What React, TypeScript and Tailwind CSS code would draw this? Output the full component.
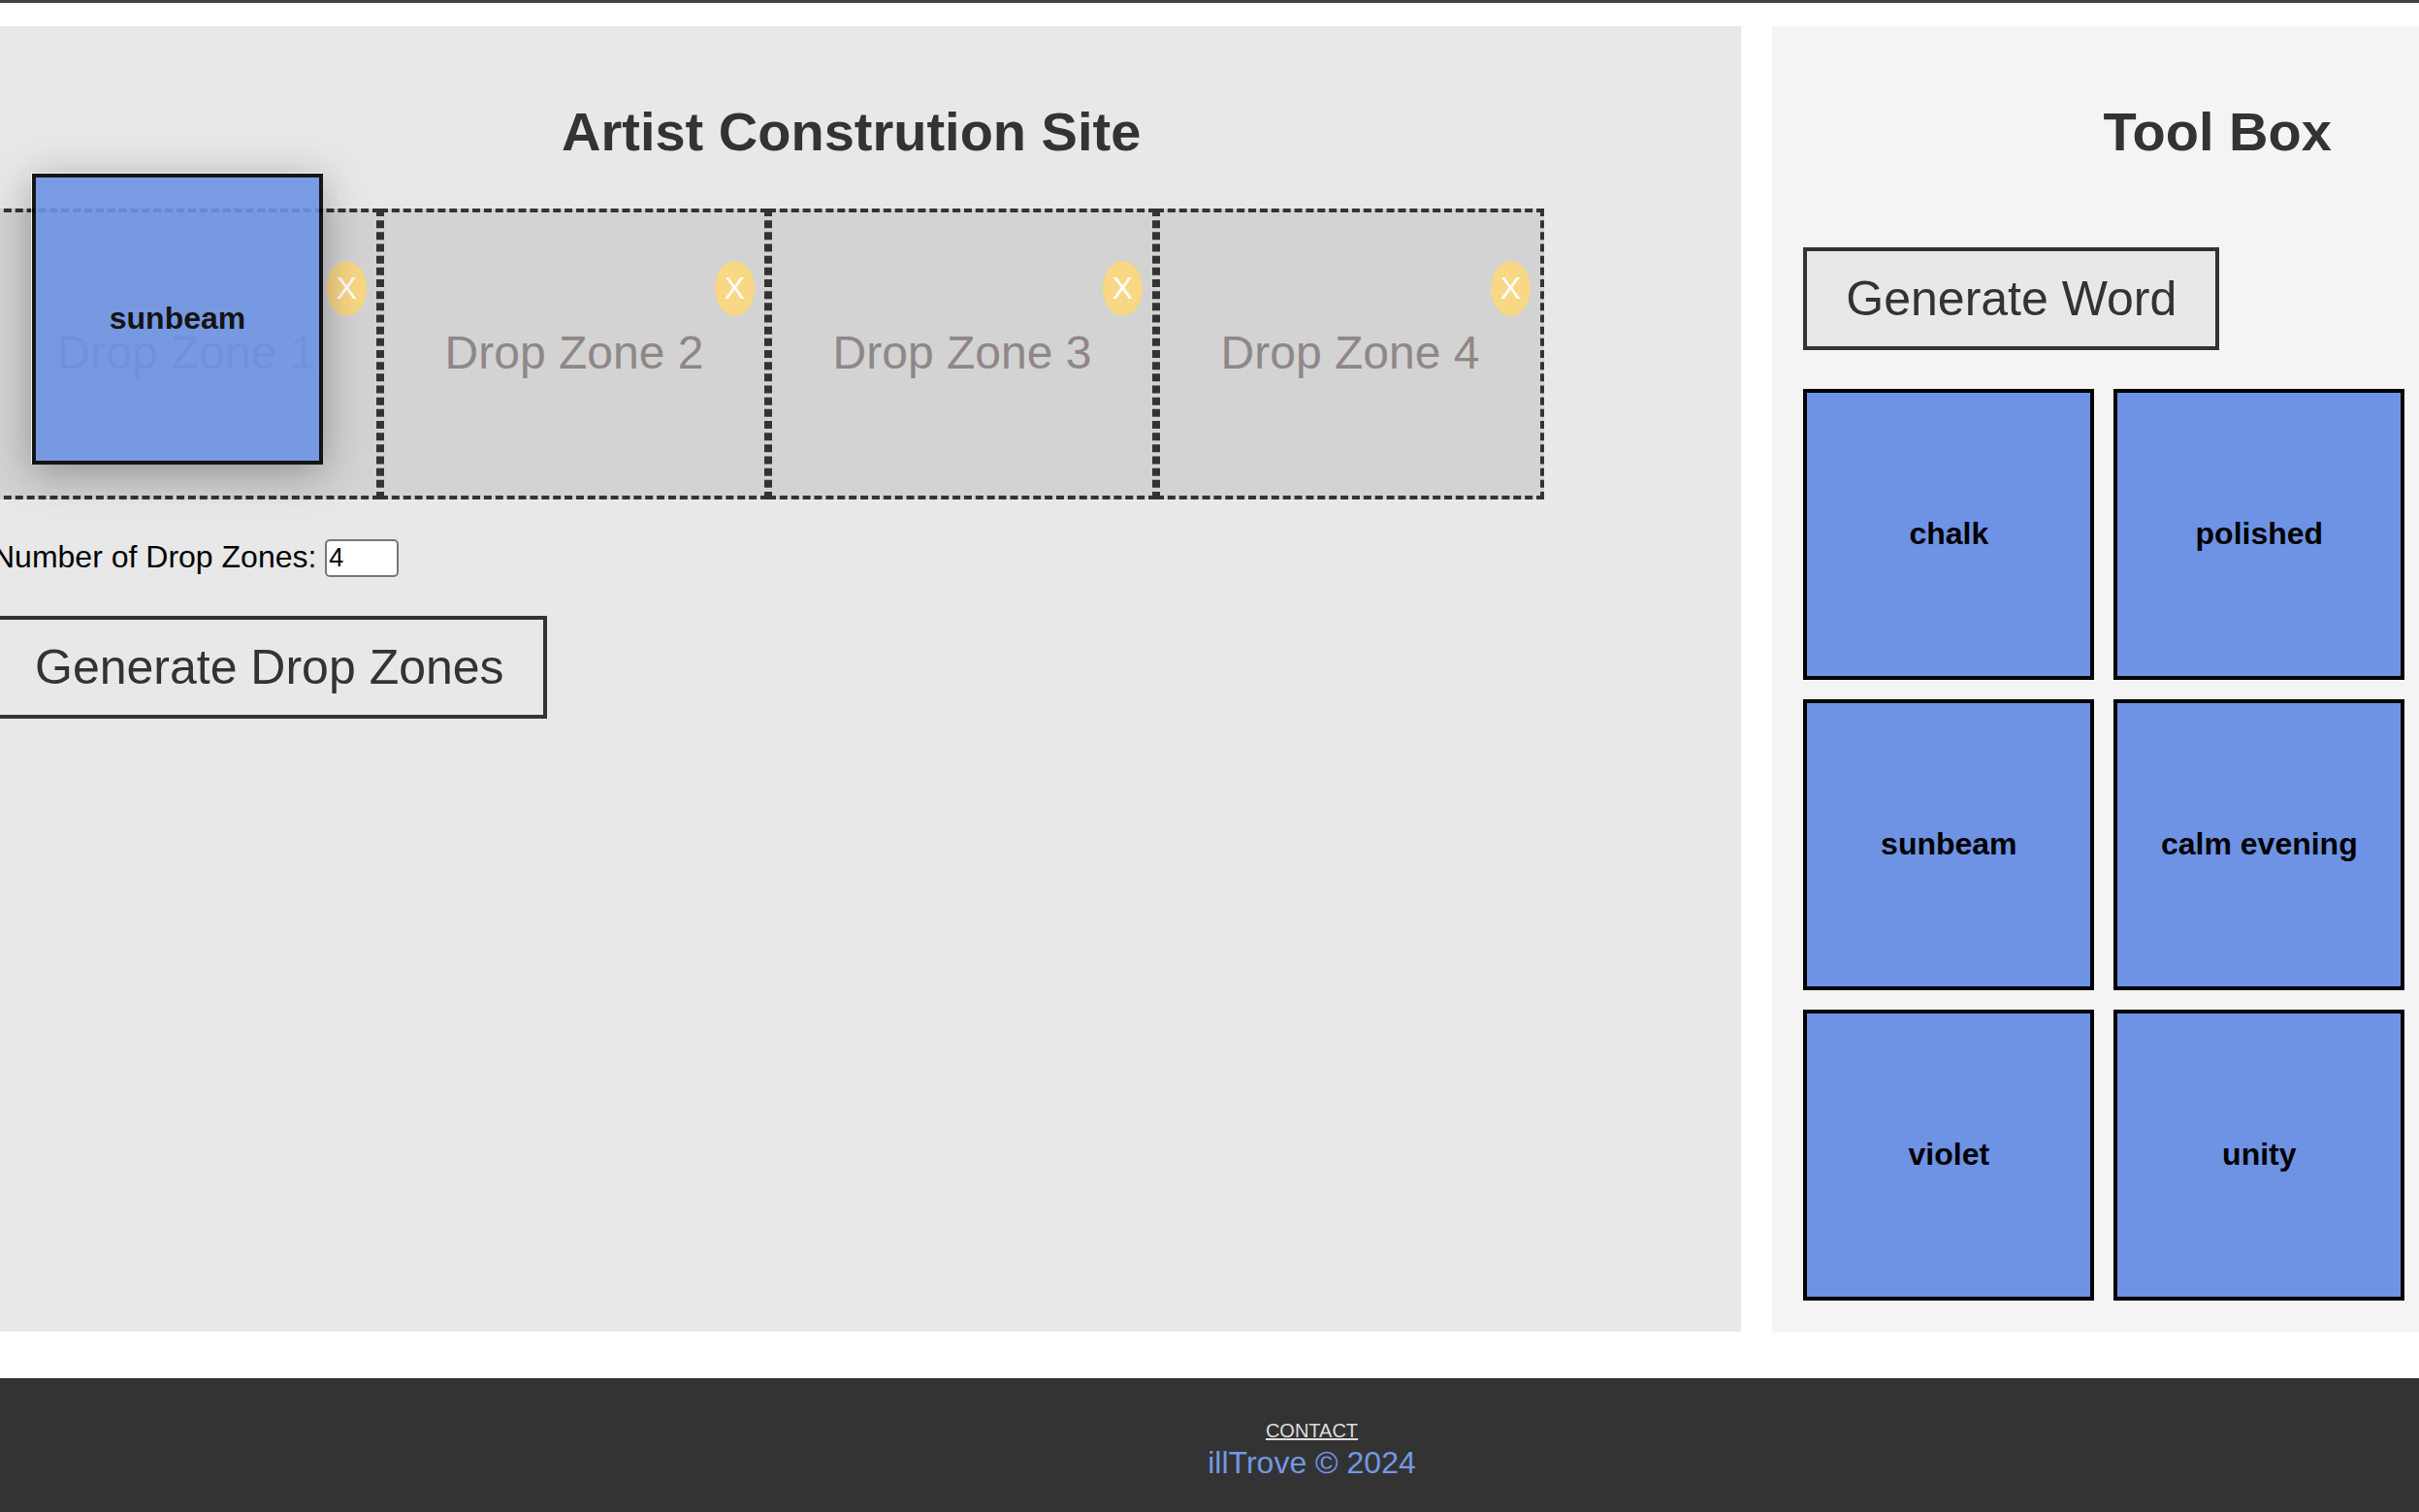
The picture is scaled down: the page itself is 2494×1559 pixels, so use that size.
import { useState } from "react";

const words = ["chalk", "polished", "sunbeam", "calm evening", "violet", "unity"];

const wordCard =
  "flex h-[300px] w-[300px] items-center justify-center border-4 border-black bg-[#6e93e4] pb-[2px] text-[32px] leading-[36px] font-bold text-black";

const outlineButton =
  "mt-10 block w-fit cursor-pointer border-4 border-[#333333] bg-[#e8e8e8] px-10 py-5 text-[50px] leading-[58px] text-[#333333]";

const panelTitle = "mt-[45px] mb-[47px] text-center text-[56px] leading-[64px] font-bold text-[#333333]";

function DropZone({ index, onRemove }: { index: number; onRemove: () => void }) {
  return (
    <li className="relative flex h-[300px] w-[400px] shrink-0 items-center justify-center border-4 border-dashed border-[#333333] bg-[#d3d3d3] pb-[2px]">
      <span className="text-[48px] leading-[54px] text-[#8f8787]">Drop Zone {index}</span>
      <button
        type="button"
        aria-label={`X, remove drop zone ${index}`}
        onClick={onRemove}
        className="absolute top-[50px] right-[10px] cursor-pointer rounded-[50%] bg-[#f8d785] px-[10px] pt-[10px] pb-[11px] text-[32px] leading-[36px] text-white"
      >
        X
      </button>
    </li>
  );
}

function ConstructionSite() {
  const [draft, setDraft] = useState("4");
  const [zones, setZones] = useState([1, 2, 3, 4]);

  const generate = () => setZones(Array.from({ length: Number(draft) || 0 }, (_, i) => i + 1));

  return (
    <section className="flex min-w-0 flex-col bg-[#e8e8e8] p-8">
      <h2 className={panelTitle}>Artist Constrution Site</h2>
      <div className="relative">
        <ul className="flex">
          {zones.map((n) => (
            <DropZone key={n} index={n} onRemove={() => setZones(zones.filter((z) => z !== n))} />
          ))}
        </ul>
        {/* Word card being dragged over the first zone */}
        <div className="absolute -top-9 left-[41px] opacity-90 shadow-[-1px_-1px_0_rgba(255,255,255,0.9),0_8px_40px_rgba(0,0,0,0.35)]">
          <div className={wordCard}>sunbeam</div>
        </div>
      </div>
      <div className="mt-10 flex h-10 items-center gap-[9px] text-[32px] leading-[36px] text-black">
        <label htmlFor="zone-count" className="pb-[2px]">
          Number of Drop Zones:
        </label>
        <input
          id="zone-count"
          type="number"
          min={1}
          value={draft}
          onChange={(e) => setDraft(e.target.value)}
          className="h-[39px] w-[76px] rounded-[5px] border-2 border-[#767676] bg-white px-[2px] text-[27px] leading-[31px]"
        />
      </div>
      <button type="button" onClick={generate} className={outlineButton}>
        Generate Drop Zones
      </button>
    </section>
  );
}

function ToolBox() {
  return (
    <section className="flex min-w-0 flex-col bg-[#f4f4f4] p-8">
      <h2 className={panelTitle}>Tool Box</h2>
      <button type="button" className={outlineButton}>
        Generate Word
      </button>
      <ul className="mt-10 grid grid-cols-[repeat(2,300px)] gap-5">
        {words.map((word) => (
          <li key={word} draggable className={wordCard}>
            {word}
          </li>
        ))}
      </ul>
    </section>
  );
}

export default function App() {
  return (
    <div className="overflow-hidden bg-white font-['Liberation_Sans',Arial,sans-serif]">
      <div className="-mr-[251px] -ml-10">
        <header className="h-[3px] bg-[#444444]" />
        <main className="mt-6 mb-12 grid grid-cols-[2fr_1fr] gap-8">
          <ConstructionSite />
          <ToolBox />
        </main>
        <footer className="bg-[#333333] py-8 text-center text-[32px] leading-[37px]">
          <p>
            <a href="#contact" className="text-[20px] leading-none text-[#dddddd] underline">
              CONTACT
            </a>
          </p>
          <p className="text-[#7398e4]">illTrove © 2024</p>
        </footer>
      </div>
    </div>
  );
}
